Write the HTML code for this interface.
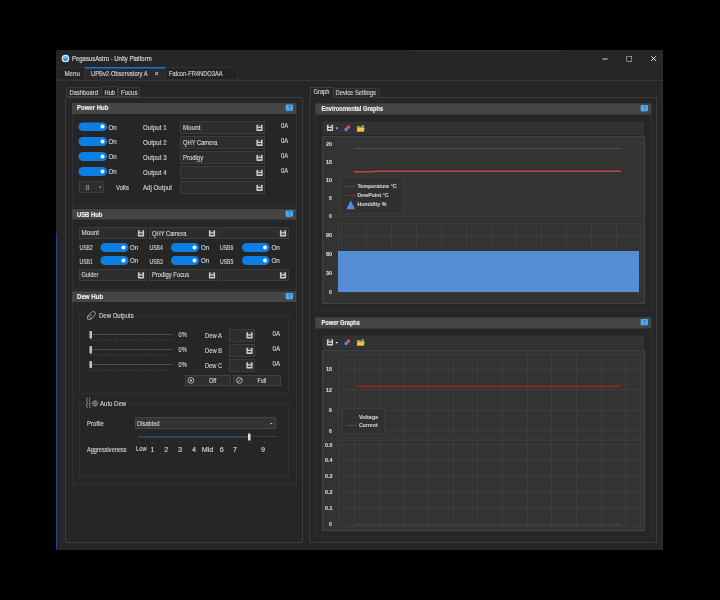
<!DOCTYPE html>
<html lang="en"><head><meta charset="utf-8"><title>PegasusAstro - Unity Platform</title>
<style>
html,body{margin:0;padding:0;background:#000;}
body{width:720px;height:600px;overflow:hidden;position:relative;}
#app{position:absolute;left:0;top:0;width:1440px;height:1200px;transform:scale(.5);transform-origin:0 0;
 font-family:"Liberation Sans",sans-serif;color:#d2d2d2;overflow:hidden;background:#000;filter:blur(1.2px);}
#app div,#app svg,#app span,#app b{position:absolute;box-sizing:border-box;}
#app span,#app b{white-space:pre;transform-origin:0 50%;-webkit-text-stroke:.3px currentColor;}
#app svg{overflow:visible;}
.tg i{position:absolute;border-radius:50%;background:#fff;display:block;}
</style></head>
<body>
<div id="app">
<div class="win" style="left:113.0px;top:101.0px;width:1213.0px;height:998.0px;background:#262626;border:1px solid #3a3a3a;"></div>
<div style="left:112.0px;top:456.0px;width:2.4px;height:643.0px;background:linear-gradient(#2c4a8a00,#2c4a8a 24px,#2c4a8a)"></div>
<div style="left:822.0px;top:99.8px;width:304.0px;height:1.4px;background:#34347a"></div>
<div style="left:114.0px;top:102.0px;width:1211.0px;height:32.5px;background:#262626;"></div>
<svg style="left:123.0px;top:109.0px" width="16" height="16" viewBox="0 0 10 10" aria-hidden="true"><circle cx="5" cy="5" r="4.800" fill="#cfeeff"/><circle cx="5" cy="5.200" r="3.100" fill="#2d8fd8"/><path d="M2.600 3.600c1.200-.9 2.400-.5 2.900.9.500-1.200 1.300-1.700 2.300-1.500-.8.300-1.300.9-1.600 1.900-1.200.2-2.400-.2-3.600-1.300z" fill="#9ed8fa"/></svg>
<span style="left:144.0px;top:109.3px;font-size:14.4px;line-height:14.4px;color:#dcdcdc;transform:scaleX(0.826);">PegasusAstro - Unity Platform</span>
<div style="left:1205.0px;top:117.0px;width:10.0px;height:2px;background:#d8d8d8"></div>
<div style="left:1253.0px;top:112.0px;width:11.0px;height:11.0px;border:1.5px solid #dcdcdc;"></div>
<svg style="left:1301.5px;top:112.0px" width="10.4" height="10.4" viewBox="0 0 10 10" aria-hidden="true"><path d="M.5.5l9 9M9.500.5l-9 9" stroke="#e8e8e8" stroke-width="1.900" fill="none"/></svg>
<div style="left:114.0px;top:134.5px;width:1211.0px;height:25.5px;background:#262626;"></div>
<div style="left:114.0px;top:159.5px;width:1211.0px;height:1px;background:#464646"></div>
<div style="left:114.0px;top:135.0px;width:55.0px;height:25.0px;background:#242424;border:1px solid #383838;"></div>
<span style="left:129.4px;top:139.5px;font-size:14.4px;line-height:14.4px;transform:scaleX(0.850);">Menu</span>
<div style="left:169.5px;top:134.5px;width:161.0px;height:26.5px;background:#2a2a2b;border:1px solid #3c3c3c;"></div>
<div style="left:169.5px;top:134.3px;width:161.0px;height:2.4px;background:#0a7adc"></div>
<span style="left:181.6px;top:139.7px;font-size:14.4px;line-height:14.4px;transform:scaleX(0.804);">UPBv2-Observatory A</span>
<span style="left:308.9px;top:140.0px;font-size:14.6px;line-height:14.6px;color:#c8c8c8;">×</span>
<div style="left:330.5px;top:135.0px;width:145.5px;height:25.0px;background:#232323;border:1px solid #3a3a3a;"></div>
<span style="left:338.0px;top:139.7px;font-size:14.4px;line-height:14.4px;transform:scaleX(0.799);">Falcon-FR4NDO3AA</span>
<div class="tabpanel" style="left:131.0px;top:194.5px;width:474.0px;height:890.5px;background:#262626;border:1px solid #525252;"></div>
<div style="left:132.5px;top:175.0px;width:66.5px;height:19.0px;background:#2a2a2a;border:1px solid #4a4a4a;"></div>
<span style="left:138.6px;top:177.9px;font-size:14.4px;line-height:14.4px;transform:scaleX(0.806);">Dashboard</span>
<div style="left:202.5px;top:172.5px;width:32.5px;height:21.5px;background:#262626;border:1px solid #5a5a5a;"></div>
<span style="left:209.2px;top:176.7px;font-size:14.4px;line-height:14.4px;transform:scaleX(0.800);">Hub</span>
<div style="left:237.0px;top:175.0px;width:43.0px;height:19.0px;background:#2a2a2a;border:1px solid #4a4a4a;"></div>
<span style="left:242.4px;top:177.9px;font-size:14.4px;line-height:14.4px;transform:scaleX(0.841);">Focus</span>
<div class="grp" style="left:143.5px;top:206.0px;width:449.5px;height:208.0px;border:1px solid #3a3a3a;"></div>
<div class="hd" style="left:143.5px;top:206.0px;width:448.5px;height:21.5px;background:#454545;"></div>
<b style="left:153.8px;top:208.0px;font-size:14.6px;line-height:14.6px;color:#f2f2f2;font-weight:bold;transform:scaleX(0.824);">Power Hub</b>
<svg style="left:571.0px;top:209.0px" width="15.2" height="14.6" viewBox="0 0 10 10" aria-hidden="true"><path d="M1.4 0h7.200A1.400 1.400 0 0 1 10 1.400v5.800a1.400 1.400 0 0 1-1.400 1.400H4.600L2.600 10 2.700 8.600H1.400A1.400 1.400 0 0 1 0 7.200V1.400A1.400 1.400 0 0 1 1.400 0z" fill="#4faaf0"/><path d="M3.700 3.200a1.500 1.400 0 1 1 2.300 1.200c-.6.400-.8.600-.8 1.200" fill="none" stroke="#1c6fc0" stroke-width="1.200"/><circle cx="5.200" cy="6.900" r=".7" fill="#1c6fc0"/></svg>
<div class="tg" style="left:157.0px;top:244.5px;width:57.0px;height:17.5px;background:#0b7fe2;border-radius:8.8px;"><i style="left:43.6px;top:4.8px;width:8px;height:8px"></i></div>
<span style="left:217.2px;top:246.5px;font-size:14.4px;line-height:14.4px;transform:scaleX(0.863);">On</span>
<span style="left:286.0px;top:247.9px;font-size:14.4px;line-height:14.4px;transform:scaleX(0.855);">Output 1</span>
<div class="in" style="left:360.5px;top:243.0px;width:169.5px;height:25.0px;background:#2d2d2d;border:1px solid #4e4e4e;"></div>
<span style="left:366.0px;top:247.4px;font-size:14.4px;line-height:14.4px;transform:scaleX(0.880);">Mount</span>
<svg style="left:512.0px;top:248.5px" width="14" height="13.44" viewBox="0 0 10 10" aria-hidden="true"><path d="M1 .5h1.900v2.700h4.200V.5H9a.6.6 0 0 1 .6.6V9a.6.6 0 0 1-.6.6H1A.6.6 0 0 1 .4 9V1.100A.6.6 0 0 1 1 .5z" fill="#cecece"/><path d="M3.500 1.300h3" stroke="#cecece" stroke-width=".7" opacity=".55" fill="none"/><path d="M2.300 6.300h5.400" stroke="#2a2a2a" stroke-width="1.800" fill="none"/></svg>
<span style="left:561.6px;top:243.5px;font-size:14.4px;line-height:14.4px;transform:scaleX(0.822);">0A</span>
<div class="tg" style="left:157.0px;top:274.0px;width:57.0px;height:18.0px;background:#0b7fe2;border-radius:8.8px;"><i style="left:43.6px;top:4.8px;width:8px;height:8px"></i></div>
<span style="left:217.2px;top:276.1px;font-size:14.4px;line-height:14.4px;transform:scaleX(0.863);">On</span>
<span style="left:286.0px;top:277.5px;font-size:14.4px;line-height:14.4px;transform:scaleX(0.855);">Output 2</span>
<div class="in" style="left:360.5px;top:273.0px;width:169.5px;height:24.5px;background:#2d2d2d;border:1px solid #4e4e4e;"></div>
<span style="left:366.0px;top:277.3px;font-size:14.4px;line-height:14.4px;transform:scaleX(0.800);">QHY Camera</span>
<svg style="left:512.0px;top:278.5px" width="14" height="13.44" viewBox="0 0 10 10" aria-hidden="true"><path d="M1 .5h1.900v2.700h4.200V.5H9a.6.6 0 0 1 .6.6V9a.6.6 0 0 1-.6.6H1A.6.6 0 0 1 .4 9V1.100A.6.6 0 0 1 1 .5z" fill="#cecece"/><path d="M3.500 1.300h3" stroke="#cecece" stroke-width=".7" opacity=".55" fill="none"/><path d="M2.300 6.300h5.400" stroke="#2a2a2a" stroke-width="1.800" fill="none"/></svg>
<span style="left:561.6px;top:273.3px;font-size:14.4px;line-height:14.4px;transform:scaleX(0.822);">0A</span>
<div class="tg" style="left:157.0px;top:304.0px;width:57.0px;height:17.5px;background:#0b7fe2;border-radius:8.8px;"><i style="left:43.6px;top:4.8px;width:8px;height:8px"></i></div>
<span style="left:217.2px;top:305.9px;font-size:14.4px;line-height:14.4px;transform:scaleX(0.863);">On</span>
<span style="left:286.0px;top:307.3px;font-size:14.4px;line-height:14.4px;transform:scaleX(0.855);">Output 3</span>
<div class="in" style="left:360.5px;top:303.0px;width:169.5px;height:24.5px;background:#2d2d2d;border:1px solid #4e4e4e;"></div>
<span style="left:366.0px;top:307.2px;font-size:14.4px;line-height:14.4px;transform:scaleX(0.824);">Prodigy</span>
<svg style="left:512.0px;top:308.5px" width="14" height="13.44" viewBox="0 0 10 10" aria-hidden="true"><path d="M1 .5h1.900v2.700h4.200V.5H9a.6.6 0 0 1 .6.6V9a.6.6 0 0 1-.6.6H1A.6.6 0 0 1 .4 9V1.100A.6.6 0 0 1 1 .5z" fill="#cecece"/><path d="M3.500 1.300h3" stroke="#cecece" stroke-width=".7" opacity=".55" fill="none"/><path d="M2.300 6.300h5.400" stroke="#2a2a2a" stroke-width="1.800" fill="none"/></svg>
<span style="left:561.6px;top:303.1px;font-size:14.4px;line-height:14.4px;transform:scaleX(0.822);">0A</span>
<div class="tg" style="left:157.0px;top:334.0px;width:57.0px;height:17.5px;background:#0b7fe2;border-radius:8.8px;"><i style="left:43.6px;top:4.8px;width:8px;height:8px"></i></div>
<span style="left:217.2px;top:335.7px;font-size:14.4px;line-height:14.4px;transform:scaleX(0.863);">On</span>
<span style="left:286.0px;top:337.1px;font-size:14.4px;line-height:14.4px;transform:scaleX(0.855);">Output 4</span>
<div class="in" style="left:360.5px;top:333.0px;width:169.5px;height:24.5px;background:#2d2d2d;border:1px solid #4e4e4e;"></div>
<svg style="left:512.0px;top:338.5px" width="14" height="13.44" viewBox="0 0 10 10" aria-hidden="true"><path d="M1 .5h1.900v2.700h4.200V.5H9a.6.6 0 0 1 .6.6V9a.6.6 0 0 1-.6.6H1A.6.6 0 0 1 .4 9V1.100A.6.6 0 0 1 1 .5z" fill="#cecece"/><path d="M3.500 1.300h3" stroke="#cecece" stroke-width=".7" opacity=".55" fill="none"/><path d="M2.300 6.300h5.400" stroke="#2a2a2a" stroke-width="1.800" fill="none"/></svg>
<span style="left:561.6px;top:332.9px;font-size:14.4px;line-height:14.4px;transform:scaleX(0.822);">0A</span>
<div class="in" style="left:158.0px;top:363.0px;width:50.0px;height:22.0px;background:#2d2d2d;border:1px solid #4e4e4e;"></div>
<span style="left:171.0px;top:366.7px;font-size:14.4px;line-height:14.4px;color:#9a9a9a;">8</span>
<svg style="left:198.0px;top:373.0px" width="4.8" height="3" viewBox="0 0 10 6" aria-hidden="true"><path d="M0 0h10L5 6z" fill="#c8c8c8"/></svg>
<span style="left:231.8px;top:366.7px;font-size:14.4px;line-height:14.4px;transform:scaleX(0.826);">Volts</span>
<span style="left:286.0px;top:367.5px;font-size:14.4px;line-height:14.4px;transform:scaleX(0.853);">Adj Output</span>
<div class="in" style="left:360.5px;top:363.0px;width:169.5px;height:25.0px;background:#2d2d2d;border:1px solid #4e4e4e;"></div>
<svg style="left:512.0px;top:368.5px" width="14" height="13.44" viewBox="0 0 10 10" aria-hidden="true"><path d="M1 .5h1.900v2.700h4.200V.5H9a.6.6 0 0 1 .6.6V9a.6.6 0 0 1-.6.6H1A.6.6 0 0 1 .4 9V1.100A.6.6 0 0 1 1 .5z" fill="#cecece"/><path d="M3.500 1.300h3" stroke="#cecece" stroke-width=".7" opacity=".55" fill="none"/><path d="M2.300 6.300h5.400" stroke="#2a2a2a" stroke-width="1.800" fill="none"/></svg>
<div class="grp" style="left:143.5px;top:417.5px;width:449.5px;height:161.0px;border:1px solid #3a3a3a;"></div>
<div class="hd" style="left:143.5px;top:417.5px;width:448.5px;height:21.5px;background:#454545;"></div>
<b style="left:153.8px;top:421.4px;font-size:14.6px;line-height:14.6px;color:#f2f2f2;font-weight:bold;transform:scaleX(0.800);">USB Hub</b>
<svg style="left:571.0px;top:420.5px" width="15.2" height="14.6" viewBox="0 0 10 10" aria-hidden="true"><path d="M1.4 0h7.200A1.400 1.400 0 0 1 10 1.400v5.800a1.400 1.400 0 0 1-1.400 1.400H4.600L2.600 10 2.700 8.600H1.400A1.400 1.400 0 0 1 0 7.200V1.400A1.400 1.400 0 0 1 1.400 0z" fill="#4faaf0"/><path d="M3.700 3.200a1.500 1.400 0 1 1 2.300 1.200c-.6.400-.8.600-.8 1.200" fill="none" stroke="#1c6fc0" stroke-width="1.200"/><circle cx="5.200" cy="6.900" r=".7" fill="#1c6fc0"/></svg>
<div class="in" style="left:158.0px;top:455.0px;width:134.5px;height:23.0px;background:#2d2d2d;border:1px solid #4e4e4e;"></div>
<span style="left:163.2px;top:456.5px;font-size:14.4px;line-height:14.4px;transform:scaleX(0.880);">Mount</span>
<svg style="left:274.5px;top:460.0px" width="14" height="13.44" viewBox="0 0 10 10" aria-hidden="true"><path d="M1 .5h1.900v2.700h4.200V.5H9a.6.6 0 0 1 .6.6V9a.6.6 0 0 1-.6.6H1A.6.6 0 0 1 .4 9V1.100A.6.6 0 0 1 1 .5z" fill="#cecece"/><path d="M3.500 1.300h3" stroke="#cecece" stroke-width=".7" opacity=".55" fill="none"/><path d="M2.300 6.300h5.400" stroke="#2a2a2a" stroke-width="1.800" fill="none"/></svg>
<div class="in" style="left:158.0px;top:538.5px;width:134.5px;height:23.0px;background:#2d2d2d;border:1px solid #4e4e4e;"></div>
<span style="left:163.2px;top:542.0px;font-size:14.4px;line-height:14.4px;transform:scaleX(0.781);">Guider</span>
<svg style="left:274.5px;top:543.5px" width="14" height="13.44" viewBox="0 0 10 10" aria-hidden="true"><path d="M1 .5h1.900v2.700h4.200V.5H9a.6.6 0 0 1 .6.6V9a.6.6 0 0 1-.6.6H1A.6.6 0 0 1 .4 9V1.100A.6.6 0 0 1 1 .5z" fill="#cecece"/><path d="M3.500 1.300h3" stroke="#cecece" stroke-width=".7" opacity=".55" fill="none"/><path d="M2.300 6.300h5.400" stroke="#2a2a2a" stroke-width="1.800" fill="none"/></svg>
<span style="left:158.6px;top:488.1px;font-size:14.4px;line-height:14.4px;transform:scaleX(0.705);">USB2</span>
<div class="tg" style="left:201.0px;top:486.0px;width:55.5px;height:17.5px;background:#0b7fe2;border-radius:8.8px;"><i style="left:42.2px;top:4.8px;width:8px;height:8px"></i></div>
<span style="left:260.2px;top:487.7px;font-size:14.4px;line-height:14.4px;transform:scaleX(0.863);">On</span>
<span style="left:158.6px;top:514.5px;font-size:14.4px;line-height:14.4px;transform:scaleX(0.705);">USB1</span>
<div class="tg" style="left:201.0px;top:512.0px;width:55.5px;height:18.0px;background:#0b7fe2;border-radius:8.8px;"><i style="left:42.2px;top:4.8px;width:8px;height:8px"></i></div>
<span style="left:260.2px;top:514.1px;font-size:14.4px;line-height:14.4px;transform:scaleX(0.863);">On</span>
<div class="in" style="left:298.0px;top:455.0px;width:137.0px;height:23.0px;background:#2d2d2d;border:1px solid #4e4e4e;"></div>
<span style="left:303.6px;top:458.5px;font-size:14.4px;line-height:14.4px;transform:scaleX(0.800);">QHY Camera</span>
<svg style="left:417.0px;top:460.0px" width="14" height="13.44" viewBox="0 0 10 10" aria-hidden="true"><path d="M1 .5h1.900v2.700h4.200V.5H9a.6.6 0 0 1 .6.6V9a.6.6 0 0 1-.6.6H1A.6.6 0 0 1 .4 9V1.100A.6.6 0 0 1 1 .5z" fill="#cecece"/><path d="M3.500 1.300h3" stroke="#cecece" stroke-width=".7" opacity=".55" fill="none"/><path d="M2.300 6.300h5.400" stroke="#2a2a2a" stroke-width="1.800" fill="none"/></svg>
<div class="in" style="left:298.0px;top:538.5px;width:137.0px;height:23.0px;background:#2d2d2d;border:1px solid #4e4e4e;"></div>
<span style="left:303.6px;top:542.0px;font-size:14.4px;line-height:14.4px;transform:scaleX(0.809);">Prodigy Focus</span>
<svg style="left:417.0px;top:543.5px" width="14" height="13.44" viewBox="0 0 10 10" aria-hidden="true"><path d="M1 .5h1.900v2.700h4.200V.5H9a.6.6 0 0 1 .6.6V9a.6.6 0 0 1-.6.6H1A.6.6 0 0 1 .4 9V1.100A.6.6 0 0 1 1 .5z" fill="#cecece"/><path d="M3.500 1.300h3" stroke="#cecece" stroke-width=".7" opacity=".55" fill="none"/><path d="M2.300 6.300h5.400" stroke="#2a2a2a" stroke-width="1.800" fill="none"/></svg>
<span style="left:299.0px;top:488.1px;font-size:14.4px;line-height:14.4px;transform:scaleX(0.705);">USB4</span>
<div class="tg" style="left:342.0px;top:486.0px;width:56.0px;height:17.5px;background:#0b7fe2;border-radius:8.8px;"><i style="left:42.8px;top:4.8px;width:8px;height:8px"></i></div>
<span style="left:401.8px;top:487.7px;font-size:14.4px;line-height:14.4px;transform:scaleX(0.863);">On</span>
<span style="left:299.0px;top:514.5px;font-size:14.4px;line-height:14.4px;transform:scaleX(0.705);">USB3</span>
<div class="tg" style="left:342.0px;top:512.0px;width:56.0px;height:18.0px;background:#0b7fe2;border-radius:8.8px;"><i style="left:42.8px;top:4.8px;width:8px;height:8px"></i></div>
<span style="left:401.8px;top:514.1px;font-size:14.4px;line-height:14.4px;transform:scaleX(0.863);">On</span>
<div class="in" style="left:439.0px;top:455.0px;width:137.5px;height:23.0px;background:#2d2d2d;border:1px solid #4e4e4e;"></div>
<svg style="left:558.5px;top:460.0px" width="14" height="13.44" viewBox="0 0 10 10" aria-hidden="true"><path d="M1 .5h1.900v2.700h4.200V.5H9a.6.6 0 0 1 .6.6V9a.6.6 0 0 1-.6.6H1A.6.6 0 0 1 .4 9V1.100A.6.6 0 0 1 1 .5z" fill="#cecece"/><path d="M3.500 1.300h3" stroke="#cecece" stroke-width=".7" opacity=".55" fill="none"/><path d="M2.300 6.300h5.400" stroke="#2a2a2a" stroke-width="1.800" fill="none"/></svg>
<div class="in" style="left:439.0px;top:538.5px;width:137.5px;height:23.0px;background:#2d2d2d;border:1px solid #4e4e4e;"></div>
<svg style="left:558.5px;top:543.5px" width="14" height="13.44" viewBox="0 0 10 10" aria-hidden="true"><path d="M1 .5h1.900v2.700h4.200V.5H9a.6.6 0 0 1 .6.6V9a.6.6 0 0 1-.6.6H1A.6.6 0 0 1 .4 9V1.100A.6.6 0 0 1 1 .5z" fill="#cecece"/><path d="M3.500 1.300h3" stroke="#cecece" stroke-width=".7" opacity=".55" fill="none"/><path d="M2.300 6.300h5.400" stroke="#2a2a2a" stroke-width="1.800" fill="none"/></svg>
<span style="left:440.0px;top:488.1px;font-size:14.4px;line-height:14.4px;transform:scaleX(0.705);">USB6</span>
<div class="tg" style="left:483.5px;top:486.0px;width:55.5px;height:17.5px;background:#0b7fe2;border-radius:8.8px;"><i style="left:42.6px;top:4.8px;width:8px;height:8px"></i></div>
<span style="left:542.8px;top:487.7px;font-size:14.4px;line-height:14.4px;transform:scaleX(0.863);">On</span>
<span style="left:440.0px;top:514.5px;font-size:14.4px;line-height:14.4px;transform:scaleX(0.705);">USB5</span>
<div class="tg" style="left:483.5px;top:512.0px;width:55.5px;height:18.0px;background:#0b7fe2;border-radius:8.8px;"><i style="left:42.6px;top:4.8px;width:8px;height:8px"></i></div>
<span style="left:542.8px;top:514.1px;font-size:14.4px;line-height:14.4px;transform:scaleX(0.863);">On</span>
<div class="grp" style="left:143.5px;top:582.5px;width:449.5px;height:387.0px;border:1px solid #3a3a3a;"></div>
<div class="hd" style="left:143.5px;top:582.5px;width:448.5px;height:21.5px;background:#454545;"></div>
<b style="left:153.8px;top:585.6px;font-size:14.6px;line-height:14.6px;color:#f2f2f2;font-weight:bold;transform:scaleX(0.839);">Dew Hub</b>
<svg style="left:571.0px;top:586.0px" width="15.2" height="14.6" viewBox="0 0 10 10" aria-hidden="true"><path d="M1.4 0h7.200A1.400 1.400 0 0 1 10 1.400v5.800a1.400 1.400 0 0 1-1.400 1.400H4.600L2.600 10 2.700 8.600H1.400A1.400 1.400 0 0 1 0 7.200V1.400A1.400 1.400 0 0 1 1.400 0z" fill="#4faaf0"/><path d="M3.700 3.200a1.500 1.400 0 1 1 2.300 1.200c-.6.400-.8.600-.8 1.200" fill="none" stroke="#1c6fc0" stroke-width="1.200"/><circle cx="5.200" cy="6.900" r=".7" fill="#1c6fc0"/></svg>
<div class="gb" style="left:158.5px;top:631.0px;width:418.5px;height:155.5px;border:1px solid #3a3a3a;"></div>
<div style="left:169.0px;top:622.0px;width:101.0px;height:20.0px;background:#262626;"></div>
<svg style="left:171.0px;top:620.0px" width="23.2" height="22.4" viewBox="0 0 20 20" aria-hidden="true"><g fill="none" stroke="#c4c4c4" stroke-width="1.2" transform="rotate(-45 10 10)"><ellipse cx="10" cy="10" rx="9.200" ry="4.600"/><path d="M5 6.200c1.500 2.400 1.500 5.200 0 7.600M8.200 8.200h4M8.200 10.400h3"/></g></svg>
<span style="left:198.2px;top:623.2px;font-size:14.4px;line-height:14.4px;color:#cfcfcf;transform:scaleX(0.834);">Dew Outputs</span>
<div style="left:178.5px;top:668.2px;width:166.5px;height:1.6px;background:#4c4c4c"></div>
<svg style="left:180.0px;top:678.0px" width="164" height="4" viewBox="0 0 82 2" aria-hidden="true"><path d="M0.8 1H82" stroke="#4a4a4a" stroke-width="1.4" stroke-dasharray="0.9 2.43" fill="none"/></svg>
<div style="left:179.0px;top:661.5px;width:4.5px;height:15.0px;background:#c2c2c2;border-radius:1.2px;"></div>
<span style="left:356.6px;top:661.3px;font-size:14.4px;line-height:14.4px;transform:scaleX(0.781);">0%</span>
<span style="left:409.6px;top:663.9px;font-size:14.4px;line-height:14.4px;transform:scaleX(0.810);">Dew A</span>
<div class="in" style="left:458.0px;top:659.0px;width:51.5px;height:24.0px;background:#2d2d2d;border:1px solid #4e4e4e;"></div>
<svg style="left:491.5px;top:664.0px" width="14" height="13.44" viewBox="0 0 10 10" aria-hidden="true"><path d="M1 .5h1.900v2.700h4.200V.5H9a.6.6 0 0 1 .6.6V9a.6.6 0 0 1-.6.6H1A.6.6 0 0 1 .4 9V1.100A.6.6 0 0 1 1 .5z" fill="#cecece"/><path d="M3.500 1.300h3" stroke="#cecece" stroke-width=".7" opacity=".55" fill="none"/><path d="M2.300 6.300h5.400" stroke="#2a2a2a" stroke-width="1.800" fill="none"/></svg>
<span style="left:545.2px;top:659.5px;font-size:14.4px;line-height:14.4px;transform:scaleX(0.867);">0A</span>
<div style="left:178.5px;top:698.2px;width:166.5px;height:1.6px;background:#4c4c4c"></div>
<svg style="left:180.0px;top:708.0px" width="164" height="4" viewBox="0 0 82 2" aria-hidden="true"><path d="M0.8 1H82" stroke="#4a4a4a" stroke-width="1.4" stroke-dasharray="0.9 2.43" fill="none"/></svg>
<div style="left:179.0px;top:691.5px;width:4.5px;height:15.0px;background:#c2c2c2;border-radius:1.2px;"></div>
<span style="left:356.6px;top:691.3px;font-size:14.4px;line-height:14.4px;transform:scaleX(0.781);">0%</span>
<span style="left:409.6px;top:693.5px;font-size:14.4px;line-height:14.4px;transform:scaleX(0.810);">Dew B</span>
<div class="in" style="left:458.0px;top:689.0px;width:51.5px;height:24.0px;background:#2d2d2d;border:1px solid #4e4e4e;"></div>
<svg style="left:491.5px;top:694.5px" width="14" height="13.44" viewBox="0 0 10 10" aria-hidden="true"><path d="M1 .5h1.900v2.700h4.200V.5H9a.6.6 0 0 1 .6.6V9a.6.6 0 0 1-.6.6H1A.6.6 0 0 1 .4 9V1.100A.6.6 0 0 1 1 .5z" fill="#cecece"/><path d="M3.500 1.300h3" stroke="#cecece" stroke-width=".7" opacity=".55" fill="none"/><path d="M2.300 6.300h5.400" stroke="#2a2a2a" stroke-width="1.800" fill="none"/></svg>
<span style="left:545.2px;top:689.5px;font-size:14.4px;line-height:14.4px;transform:scaleX(0.867);">0A</span>
<div style="left:178.5px;top:728.2px;width:166.5px;height:1.6px;background:#4c4c4c"></div>
<svg style="left:180.0px;top:738.0px" width="164" height="4" viewBox="0 0 82 2" aria-hidden="true"><path d="M0.8 1H82" stroke="#4a4a4a" stroke-width="1.4" stroke-dasharray="0.9 2.43" fill="none"/></svg>
<div style="left:179.0px;top:721.5px;width:4.5px;height:14.5px;background:#c2c2c2;border-radius:1.2px;"></div>
<span style="left:356.6px;top:721.1px;font-size:14.4px;line-height:14.4px;transform:scaleX(0.781);">0%</span>
<span style="left:409.6px;top:723.7px;font-size:14.4px;line-height:14.4px;transform:scaleX(0.791);">Dew C</span>
<div class="in" style="left:458.0px;top:719.0px;width:51.5px;height:24.0px;background:#2d2d2d;border:1px solid #4e4e4e;"></div>
<svg style="left:491.5px;top:724.0px" width="14" height="13.44" viewBox="0 0 10 10" aria-hidden="true"><path d="M1 .5h1.900v2.700h4.200V.5H9a.6.6 0 0 1 .6.6V9a.6.6 0 0 1-.6.6H1A.6.6 0 0 1 .4 9V1.100A.6.6 0 0 1 1 .5z" fill="#cecece"/><path d="M3.500 1.300h3" stroke="#cecece" stroke-width=".7" opacity=".55" fill="none"/><path d="M2.300 6.300h5.400" stroke="#2a2a2a" stroke-width="1.800" fill="none"/></svg>
<span style="left:545.2px;top:719.3px;font-size:14.4px;line-height:14.4px;transform:scaleX(0.867);">0A</span>
<div class="btn" style="left:370.5px;top:749.5px;width:90.5px;height:22.0px;background:#2f2f2f;border:1px solid #565656;"></div>
<svg style="left:374.5px;top:753.5px" width="13.6" height="13.6" viewBox="0 0 10 10" aria-hidden="true"><circle cx="5" cy="5" r="4.2" fill="none" stroke="#d8d8d8" stroke-width="1.100"/><circle cx="5" cy="5" r="1.5" fill="#d8d8d8"/></svg>
<span style="left:417.6px;top:752.9px;font-size:14.4px;line-height:14.4px;transform:scaleX(0.779);">Off</span>
<div class="btn" style="left:467.0px;top:749.5px;width:94.5px;height:22.0px;background:#2f2f2f;border:1px solid #565656;"></div>
<svg style="left:471.5px;top:753.5px" width="13.6" height="13.6" viewBox="0 0 10 10" aria-hidden="true"><circle cx="5" cy="5" r="4.2" fill="none" stroke="#d8d8d8" stroke-width="1.100"/><path d="M2.200 7.800l5.600-5.600" stroke="#d8d8d8" stroke-width="1.100"/></svg>
<span style="left:514.6px;top:752.9px;font-size:14.4px;line-height:14.4px;transform:scaleX(0.748);">Full</span>
<div class="gb" style="left:158.5px;top:806.5px;width:418.5px;height:147.5px;border:1px solid #3a3a3a;"></div>
<div style="left:169.0px;top:798.0px;width:87.0px;height:20.0px;background:#262626;"></div>
<svg style="left:170.5px;top:794.0px" width="26.4" height="24" viewBox="0 0 26.400 24" aria-hidden="true"><g fill="none" stroke="#c4c4c4" stroke-width="1.3"><path d="M3 4.500c-2.200 3.500 2.200 6 0 9.500s2.200 5.500 0 8.500M8.400 4.500c-2.200 3.500 2.200 6 0 9.500s2.200 5.500 0 8.500"/><circle cx="19" cy="12.800" r="4.600"/><circle cx="19" cy="12.800" r="1.600"/><path d="M19 6v1.800M19 17.800v1.800M12.200 12.800H14M24 12.800h1.800M14.200 8l1.300 1.300M22.500 16.300l1.300 1.300M14.200 17.600l1.300-1.300M22.500 9.300L23.800 8"/></g><circle cx="3" cy="2.600" r="1.100" fill="#c4c4c4"/><circle cx="8.400" cy="2.600" r="1.100" fill="#c4c4c4"/></svg>
<span style="left:200.2px;top:799.5px;font-size:14.4px;line-height:14.4px;color:#cfcfcf;transform:scaleX(0.839);">Auto Dew</span>
<span style="left:174.2px;top:839.3px;font-size:14.4px;line-height:14.4px;transform:scaleX(0.824);">Profile</span>
<div class="in" style="left:270.5px;top:835.0px;width:280.5px;height:23.0px;background:#333336;border:1px solid #5c5c5c;"></div>
<span style="left:274.0px;top:838.9px;font-size:14.4px;line-height:14.4px;transform:scaleX(0.807);">Disabled</span>
<svg style="left:540.0px;top:845.5px" width="5" height="3.2" viewBox="0 0 10 6" aria-hidden="true"><path d="M0 0h10L5 6z" fill="#c8c8c8"/></svg>
<div style="left:276.0px;top:872.7px;width:279.0px;height:1.6px;background:#505050"></div>
<div style="left:276.0px;top:872.5px;width:222.0px;height:2.0px;background:#1e5f94"></div>
<div style="left:496.0px;top:866.5px;width:5.0px;height:14.5px;background:#e0e0e0;border-radius:1.2px;"></div>
<svg style="left:276.0px;top:883.0px" width="282" height="4" viewBox="0 0 141 2" aria-hidden="true"><path d="M0.6 1H141" stroke="#484848" stroke-width="1.6" stroke-dasharray="0.9 13.03" fill="none"/></svg>
<span style="left:174.2px;top:891.2px;font-size:14.4px;line-height:14.4px;transform:scaleX(0.780);">Aggressiveness</span>
<span style="left:272.2px;top:890.1px;font-size:14.4px;line-height:14.4px;transform:scaleX(0.800);">Low</span>
<span style="left:301.2px;top:891.1px;font-size:14.4px;line-height:14.4px;">1</span>
<span style="left:328.6px;top:891.1px;font-size:14.4px;line-height:14.4px;">2</span>
<span style="left:356.2px;top:891.1px;font-size:14.4px;line-height:14.4px;">3</span>
<span style="left:384.2px;top:891.1px;font-size:14.4px;line-height:14.4px;">4</span>
<span style="left:403.5px;top:891.1px;font-size:14.4px;line-height:14.4px;">Mid</span>
<span style="left:439.6px;top:891.1px;font-size:14.4px;line-height:14.4px;">6</span>
<span style="left:466.0px;top:891.1px;font-size:14.4px;line-height:14.4px;">7</span>
<span style="left:521.8px;top:891.1px;font-size:14.4px;line-height:14.4px;">9</span>
<div class="tabpanel" style="left:619.0px;top:195.0px;width:694.0px;height:890.0px;background:#262626;border:1px solid #525252;"></div>
<div style="left:620.0px;top:173.5px;width:46.5px;height:23.0px;background:#262626;border:1px solid #5a5a5a;border-bottom-color:#262626;"></div>
<span style="left:626.6px;top:175.4px;font-size:14.4px;line-height:14.4px;transform:scaleX(0.800);">Graph</span>
<div style="left:666.5px;top:176.0px;width:92.0px;height:19.5px;background:#2b2b2b;border:1px solid #4a4a4a;"></div>
<span style="left:670.6px;top:178.1px;font-size:14.4px;line-height:14.4px;transform:scaleX(0.808);">Device Settings</span>
<div class="grp" style="left:631.0px;top:207.0px;width:672.0px;height:415.0px;border:1px solid #3a3a3a;"></div>
<div class="hd" style="left:631.0px;top:207.0px;width:671.0px;height:21.5px;background:#454545;"></div>
<b style="left:643.0px;top:209.8px;font-size:14.6px;line-height:14.6px;color:#f2f2f2;font-weight:bold;transform:scaleX(0.787);">Environmental Graphs</b>
<svg style="left:1281.0px;top:210.0px" width="15.2" height="14.6" viewBox="0 0 10 10" aria-hidden="true"><path d="M1.4 0h7.200A1.400 1.400 0 0 1 10 1.400v5.800a1.400 1.400 0 0 1-1.400 1.400H4.600L2.600 10 2.700 8.600H1.400A1.400 1.400 0 0 1 0 7.200V1.400A1.400 1.400 0 0 1 1.400 0z" fill="#4faaf0"/><path d="M3.700 3.200a1.500 1.400 0 1 1 2.300 1.200c-.6.400-.8.600-.8 1.200" fill="none" stroke="#1c6fc0" stroke-width="1.200"/><circle cx="5.200" cy="6.900" r=".7" fill="#1c6fc0"/></svg>
<div style="left:645.0px;top:242.5px;width:642.5px;height:27.5px;background:#323232;"></div>
<svg style="left:652.5px;top:249.0px" width="14" height="13.44" viewBox="0 0 10 10" aria-hidden="true"><path d="M1 .5h1.900v2.700h4.200V.5H9a.6.6 0 0 1 .6.6V9a.6.6 0 0 1-.6.6H1A.6.6 0 0 1 .4 9V1.100A.6.6 0 0 1 1 .5z" fill="#d0d0d0"/><path d="M3.500 1.300h3" stroke="#d0d0d0" stroke-width=".7" opacity=".55" fill="none"/><path d="M2.300 6.300h5.400" stroke="#2a2a2a" stroke-width="1.800" fill="none"/></svg>
<svg style="left:671.0px;top:255.0px" width="5.2" height="3.4" viewBox="0 0 10 6" aria-hidden="true"><path d="M0 0h10L5 6z" fill="#e0e0e0"/></svg>
<svg style="left:686.5px;top:248.5px" width="15.2" height="15.2" viewBox="0 0 20 20" aria-hidden="true"><g transform="rotate(-45 10 10)"><rect x="1.500" y="5.800" width="8.500" height="8.400" rx="2.600" fill="#3f97ea"/><rect x="10" y="5.800" width="8.500" height="8.400" rx="2.600" fill="#ee4a5e"/></g></svg>
<svg style="left:712.5px;top:248.5px" width="16.4" height="14.8" viewBox="0 0 20 18" aria-hidden="true"><path d="M1 3.500h6.500l1.500 2h9.500v11.500H1z" fill="#c9903a"/><path d="M.5 17l2.500-8.500H20L17.500 17z" fill="#f6c04a"/><circle cx="15.200" cy="4.600" r="3.400" fill="#57b85a"/></svg>
<div class="chart" style="left:645.0px;top:273.0px;width:645.0px;height:333.5px;background:#333333;border:1px solid #585858;"></div>
<div style="left:676.5px;top:283.0px;width:604.0px;height:149.5px;border:1px solid #3e3e3e;"></div>
<div style="left:676.5px;top:324.0px;width:603.5px;height:1px;background:#3d3d3d"></div>
<div style="left:676.5px;top:360.0px;width:603.5px;height:1px;background:#3d3d3d"></div>
<div style="left:676.5px;top:395.5px;width:603.5px;height:1px;background:#3d3d3d"></div>
<span style="left:652.4px;top:282.7px;font-size:11.8px;line-height:11.8px;color:#d4d4d4;font-weight:bold;transform:scaleX(0.923);">20</span>
<span style="left:652.4px;top:318.3px;font-size:11.8px;line-height:11.8px;color:#d4d4d4;font-weight:bold;transform:scaleX(0.923);">15</span>
<span style="left:652.4px;top:353.9px;font-size:11.8px;line-height:11.8px;color:#d4d4d4;font-weight:bold;transform:scaleX(0.923);">10</span>
<span style="left:658.4px;top:389.6px;font-size:11.8px;line-height:11.8px;color:#d4d4d4;font-weight:bold;transform:scaleX(0.857);">5</span>
<span style="left:658.4px;top:426.7px;font-size:11.8px;line-height:11.8px;color:#d4d4d4;font-weight:bold;transform:scaleX(0.857);">0</span>
<div style="left:708.0px;top:295.8px;width:533.5px;height:1.4px;background:#4f809e"></div>
<div style="left:708.0px;top:342.45px;width:42.0px;height:2.1px;background:#bc474b"></div>
<div style="left:748.0px;top:341.45px;width:493.5px;height:2.1px;background:#bc474b"></div>
<div class="legend" style="left:680.0px;top:354.0px;width:126.5px;height:72.5px;background:#303030;border:1px solid #444;"></div>
<div style="left:691.0px;top:371.95px;width:19.5px;height:1.1px;background:#41749a"></div>
<span style="left:715.4px;top:365.7px;font-size:12.2px;line-height:12.2px;color:#cacaca;font-weight:bold;transform:scaleX(0.871);">Temperature °C</span>
<div style="left:691.0px;top:389.95px;width:19.5px;height:1.1px;background:#a8444a"></div>
<span style="left:715.4px;top:383.7px;font-size:12.2px;line-height:12.2px;color:#cacaca;font-weight:bold;transform:scaleX(0.855);">DewPoint °C</span>
<svg style="left:690.5px;top:400.5px" width="20.8" height="17.6" viewBox="0 0 10 10" aria-hidden="true"><path d="M5 0l5 10H0z" fill="#4f8fe0"/></svg>
<span style="left:715.4px;top:402.1px;font-size:12.2px;line-height:12.2px;color:#cacaca;font-weight:bold;transform:scaleX(0.873);">Humidity %</span>
<div style="left:676.5px;top:446.5px;width:604.0px;height:138.0px;border:1px solid #444;"></div>
<div style="left:682.0px;top:446.5px;width:1px;height:137.5px;background:#474747"></div>
<div style="left:732.0px;top:446.5px;width:1px;height:137.5px;background:#474747"></div>
<div style="left:782.0px;top:446.5px;width:1px;height:137.5px;background:#474747"></div>
<div style="left:832.0px;top:446.5px;width:1px;height:137.5px;background:#474747"></div>
<div style="left:882.0px;top:446.5px;width:1px;height:137.5px;background:#474747"></div>
<div style="left:932.0px;top:446.5px;width:1px;height:137.5px;background:#474747"></div>
<div style="left:982.0px;top:446.5px;width:1px;height:137.5px;background:#474747"></div>
<div style="left:1032.0px;top:446.5px;width:1px;height:137.5px;background:#474747"></div>
<div style="left:1082.0px;top:446.5px;width:1px;height:137.5px;background:#474747"></div>
<div style="left:1132.0px;top:446.5px;width:1px;height:137.5px;background:#474747"></div>
<div style="left:1182.0px;top:446.5px;width:1px;height:137.5px;background:#474747"></div>
<div style="left:1232.0px;top:446.5px;width:1px;height:137.5px;background:#474747"></div>
<div style="left:676.5px;top:470.0px;width:603.5px;height:1px;background:#474747"></div>
<div style="left:676.5px;top:507.5px;width:603.5px;height:1px;background:#474747"></div>
<div style="left:676.5px;top:545.0px;width:603.5px;height:1px;background:#474747"></div>
<span style="left:652.4px;top:464.1px;font-size:11.8px;line-height:11.8px;color:#d4d4d4;font-weight:bold;transform:scaleX(0.923);">90</span>
<span style="left:652.4px;top:501.7px;font-size:11.8px;line-height:11.8px;color:#d4d4d4;font-weight:bold;transform:scaleX(0.923);">60</span>
<span style="left:652.4px;top:540.8px;font-size:11.8px;line-height:11.8px;color:#d4d4d4;font-weight:bold;transform:scaleX(0.923);">30</span>
<span style="left:658.4px;top:577.9px;font-size:11.8px;line-height:11.8px;color:#d4d4d4;font-weight:bold;transform:scaleX(0.857);">0</span>
<div class="area" style="left:675.5px;top:502.0px;width:602.5px;height:82.0px;background:#558ed5;"></div>
<div class="grp" style="left:631.0px;top:634.5px;width:672.0px;height:438.0px;border:1px solid #3a3a3a;"></div>
<div class="hd" style="left:631.0px;top:634.5px;width:671.0px;height:22.5px;background:#454545;"></div>
<b style="left:643.0px;top:637.8px;font-size:14.6px;line-height:14.6px;color:#f2f2f2;font-weight:bold;transform:scaleX(0.778);">Power Graphs</b>
<svg style="left:1281.0px;top:637.5px" width="15.2" height="14.6" viewBox="0 0 10 10" aria-hidden="true"><path d="M1.4 0h7.200A1.400 1.400 0 0 1 10 1.400v5.800a1.400 1.400 0 0 1-1.400 1.400H4.600L2.600 10 2.700 8.600H1.400A1.400 1.400 0 0 1 0 7.200V1.400A1.400 1.400 0 0 1 1.400 0z" fill="#4faaf0"/><path d="M3.700 3.200a1.500 1.400 0 1 1 2.300 1.200c-.6.400-.8.600-.8 1.200" fill="none" stroke="#1c6fc0" stroke-width="1.200"/><circle cx="5.200" cy="6.900" r=".7" fill="#1c6fc0"/></svg>
<div style="left:645.0px;top:671.0px;width:642.5px;height:27.5px;background:#323232;"></div>
<svg style="left:652.5px;top:677.5px" width="14" height="13.44" viewBox="0 0 10 10" aria-hidden="true"><path d="M1 .5h1.900v2.700h4.200V.5H9a.6.6 0 0 1 .6.6V9a.6.6 0 0 1-.6.6H1A.6.6 0 0 1 .4 9V1.100A.6.6 0 0 1 1 .5z" fill="#d0d0d0"/><path d="M3.500 1.300h3" stroke="#d0d0d0" stroke-width=".7" opacity=".55" fill="none"/><path d="M2.300 6.300h5.400" stroke="#2a2a2a" stroke-width="1.800" fill="none"/></svg>
<svg style="left:671.0px;top:683.5px" width="5.2" height="3.4" viewBox="0 0 10 6" aria-hidden="true"><path d="M0 0h10L5 6z" fill="#e0e0e0"/></svg>
<svg style="left:686.5px;top:677.0px" width="15.2" height="15.2" viewBox="0 0 20 20" aria-hidden="true"><g transform="rotate(-45 10 10)"><rect x="1.500" y="5.800" width="8.500" height="8.400" rx="2.600" fill="#3f97ea"/><rect x="10" y="5.800" width="8.500" height="8.400" rx="2.600" fill="#ee4a5e"/></g></svg>
<svg style="left:712.5px;top:677.0px" width="16.4" height="14.8" viewBox="0 0 20 18" aria-hidden="true"><path d="M1 3.500h6.500l1.500 2h9.500v11.500H1z" fill="#c9903a"/><path d="M.5 17l2.500-8.500H20L17.500 17z" fill="#f6c04a"/><circle cx="15.200" cy="4.600" r="3.400" fill="#57b85a"/></svg>
<div class="chart" style="left:645.0px;top:701.0px;width:645.0px;height:360.5px;background:#333333;border:1px solid #585858;"></div>
<div style="left:677.0px;top:708.5px;width:603.5px;height:168.5px;border:1px solid #444;"></div>
<div style="left:708.5px;top:708.5px;width:1px;height:168.5px;background:#474747"></div>
<div style="left:758.0px;top:708.5px;width:1px;height:168.5px;background:#474747"></div>
<div style="left:807.5px;top:708.5px;width:1px;height:168.5px;background:#474747"></div>
<div style="left:856.5px;top:708.5px;width:1px;height:168.5px;background:#474747"></div>
<div style="left:906.0px;top:708.5px;width:1px;height:168.5px;background:#474747"></div>
<div style="left:955.0px;top:708.5px;width:1px;height:168.5px;background:#474747"></div>
<div style="left:1004.5px;top:708.5px;width:1px;height:168.5px;background:#474747"></div>
<div style="left:1054.0px;top:708.5px;width:1px;height:168.5px;background:#474747"></div>
<div style="left:1103.0px;top:708.5px;width:1px;height:168.5px;background:#474747"></div>
<div style="left:1152.5px;top:708.5px;width:1px;height:168.5px;background:#474747"></div>
<div style="left:1201.5px;top:708.5px;width:1px;height:168.5px;background:#474747"></div>
<div style="left:1251.0px;top:708.5px;width:1px;height:168.5px;background:#474747"></div>
<div style="left:676.5px;top:738.0px;width:603.5px;height:1px;background:#474747"></div>
<div style="left:676.5px;top:779.0px;width:603.5px;height:1px;background:#474747"></div>
<div style="left:676.5px;top:820.0px;width:603.5px;height:1px;background:#474747"></div>
<div style="left:676.5px;top:861.0px;width:603.5px;height:1px;background:#474747"></div>
<span style="left:652.4px;top:732.3px;font-size:11.8px;line-height:11.8px;color:#d4d4d4;font-weight:bold;transform:scaleX(0.923);">15</span>
<span style="left:652.4px;top:774.7px;font-size:11.8px;line-height:11.8px;color:#d4d4d4;font-weight:bold;transform:scaleX(0.923);">12</span>
<span style="left:658.4px;top:814.1px;font-size:11.8px;line-height:11.8px;color:#d4d4d4;font-weight:bold;transform:scaleX(0.857);">9</span>
<span style="left:658.4px;top:856.6px;font-size:11.8px;line-height:11.8px;color:#d4d4d4;font-weight:bold;transform:scaleX(0.857);">6</span>
<div style="left:711.0px;top:771.2px;width:530.5px;height:2.6px;background:#a3201c"></div>
<div class="legend" style="left:683.5px;top:815.5px;width:85.5px;height:51.0px;background:#303030;border:1px solid #444;"></div>
<div style="left:694.5px;top:833.5px;width:18.5px;height:1.0px;background:#a3201c"></div>
<span style="left:717.6px;top:827.7px;font-size:12.2px;line-height:12.2px;color:#cacaca;font-weight:bold;transform:scaleX(0.893);">Voltage</span>
<div style="left:694.5px;top:851.0px;width:18.5px;height:1.0px;background:#4a80ad"></div>
<span style="left:717.6px;top:843.6px;font-size:12.2px;line-height:12.2px;color:#cacaca;font-weight:bold;transform:scaleX(0.845);">Current</span>
<div style="left:677.0px;top:881.0px;width:603.5px;height:171.5px;border:1px solid #444;"></div>
<div style="left:708.5px;top:881.0px;width:1px;height:171.5px;background:#474747"></div>
<div style="left:758.0px;top:881.0px;width:1px;height:171.5px;background:#474747"></div>
<div style="left:807.5px;top:881.0px;width:1px;height:171.5px;background:#474747"></div>
<div style="left:856.5px;top:881.0px;width:1px;height:171.5px;background:#474747"></div>
<div style="left:906.0px;top:881.0px;width:1px;height:171.5px;background:#474747"></div>
<div style="left:955.0px;top:881.0px;width:1px;height:171.5px;background:#474747"></div>
<div style="left:1004.5px;top:881.0px;width:1px;height:171.5px;background:#474747"></div>
<div style="left:1054.0px;top:881.0px;width:1px;height:171.5px;background:#474747"></div>
<div style="left:1103.0px;top:881.0px;width:1px;height:171.5px;background:#474747"></div>
<div style="left:1152.5px;top:881.0px;width:1px;height:171.5px;background:#474747"></div>
<div style="left:1201.5px;top:881.0px;width:1px;height:171.5px;background:#474747"></div>
<div style="left:1251.0px;top:881.0px;width:1px;height:171.5px;background:#474747"></div>
<div style="left:676.5px;top:888.5px;width:603.5px;height:1px;background:#474747"></div>
<div style="left:676.5px;top:920.5px;width:603.5px;height:1px;background:#474747"></div>
<div style="left:676.5px;top:952.0px;width:603.5px;height:1px;background:#474747"></div>
<div style="left:676.5px;top:984.0px;width:603.5px;height:1px;background:#474747"></div>
<div style="left:676.5px;top:1015.5px;width:603.5px;height:1px;background:#474747"></div>
<span style="left:649.8px;top:883.9px;font-size:11.8px;line-height:11.8px;color:#d4d4d4;font-weight:bold;transform:scaleX(0.912);">0.5</span>
<span style="left:649.8px;top:914.6px;font-size:11.8px;line-height:11.8px;color:#d4d4d4;font-weight:bold;transform:scaleX(0.912);">0.4</span>
<span style="left:649.8px;top:946.3px;font-size:11.8px;line-height:11.8px;color:#d4d4d4;font-weight:bold;transform:scaleX(0.912);">0.3</span>
<span style="left:649.8px;top:978.0px;font-size:11.8px;line-height:11.8px;color:#d4d4d4;font-weight:bold;transform:scaleX(0.912);">0.2</span>
<span style="left:649.8px;top:1009.7px;font-size:11.8px;line-height:11.8px;color:#d4d4d4;font-weight:bold;transform:scaleX(0.912);">0.1</span>
<span style="left:658.4px;top:1041.5px;font-size:11.8px;line-height:11.8px;color:#d4d4d4;font-weight:bold;transform:scaleX(0.857);">0</span>
<div style="left:711.0px;top:1047.5px;width:530.5px;height:1.0px;background:#40607e"></div>
</div></body></html>
